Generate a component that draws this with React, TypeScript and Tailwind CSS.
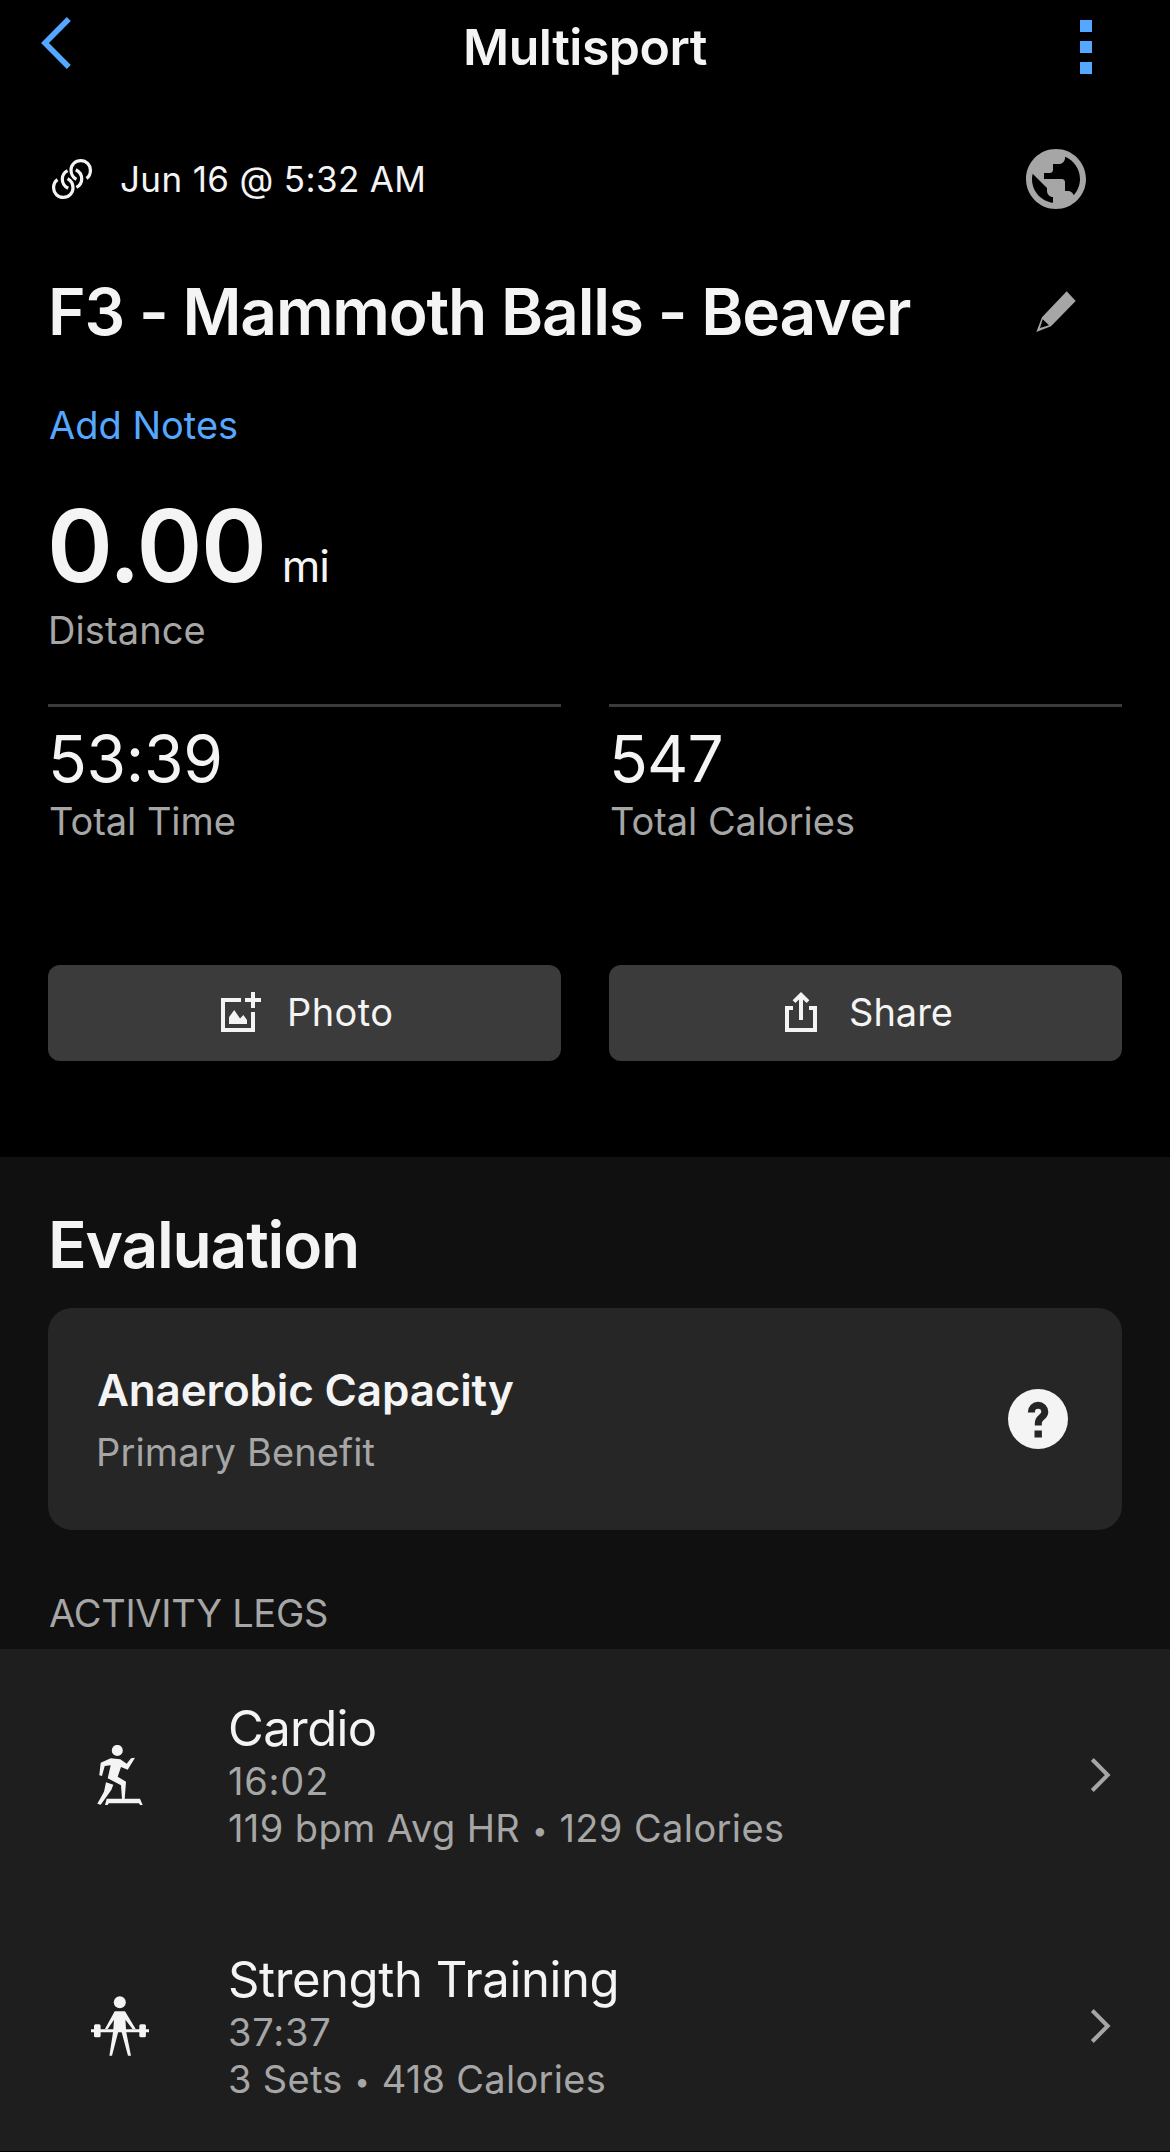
import type { ReactNode } from 'react';

function BackIcon() {
  return (
    <svg width="30" height="52" viewBox="0 0 30 52" fill="none" stroke="currentColor" strokeWidth="5.6">
      <path d="M27.8 2 4 26l23.8 24" />
    </svg>
  );
}

function LinkIcon() {
  const half = (
    <>
      <path d="M5.5 20.6C3 22.4 1.6 25.3 1.6 28.6a9.6 9.6 0 0 0 9.6 9.8c5.6 0 9.8-4.2 9.8-9.4 0-4-2-7.5-5.4-9.4" />
      <path d="M15.6 11.6C12 13.5 10.3 16.5 10.3 20c0 4 2.2 7.5 5.9 9.3" />
    </>
  );
  return (
    <svg width="40" height="40" viewBox="0 0 40 40" fill="none" stroke="currentColor" strokeWidth="3.2">
      {half}
      <g transform="rotate(180 20 20)">{half}</g>
    </svg>
  );
}

function GlobeIcon() {
  return (
    <svg width="60" height="60" viewBox="2 2 20 20" fill="currentColor">
      <path d="M12 2C6.48 2 2 6.48 2 12s4.48 10 10 10 10-4.48 10-10S17.52 2 12 2zm-1 17.93c-3.95-.49-7-3.85-7-7.93 0-.62.08-1.21.21-1.79L9 15v1c0 1.1.9 2 2 2v1.93zm6.9-2.54c-.26-.81-1-1.39-1.9-1.39h-1v-3c0-.55-.45-1-1-1H8v-2h2c.55 0 1-.45 1-1V7h2c1.1 0 2-.9 2-2v-.41c2.93 1.19 5 4.06 5 7.41 0 2.08-.8 3.97-2.1 5.39z" />
    </svg>
  );
}

function PencilIcon() {
  return (
    <svg width="40" height="41" viewBox="0 0 40 41" fill="currentColor" fillRule="evenodd">
      <path d="M30.7.3 39.7 10 15 35.3.3 41 6 26.3ZM6.7 28.3 4 37l9-2.7Z" />
    </svg>
  );
}

function PhotoIcon() {
  return (
    <svg width="40" height="40" viewBox="0 0 40 40" fill="currentColor">
      <path d="M0 6h20v4H4v26h26V20h4v20H0Z" />
      <path d="M30 0h4v6h6v4h-6v6h-4v-6h-6V6h6Z" />
      <path d="M8 25.2 13.2 18l5.8 8.4 3.4-3.4L26 28v4H8Z" />
    </svg>
  );
}

function ShareIcon() {
  return (
    <svg width="40" height="40" viewBox="-4 0 40 40" fill="none" stroke="currentColor" strokeWidth="4">
      <path d="M8 16H2v22h28V16h-6M16 28V3M9 9.6l7-6.8 7 6.8" />
    </svg>
  );
}

function HelpIcon() {
  return (
    <svg width="60" height="60" viewBox="0 0 60 60">
      <circle cx="30" cy="30" r="30" fill="#f4f4f4" />
      <path
        d="M23.4 23.6V23a6.7 6.7 0 0 1 13.4 0c0 5.4-6.5 5-6.5 11.2v2.3"
        fill="none"
        stroke="#262626"
        strokeWidth="7"
      />
      <path d="M26.5 41.6h7.4v7h-7.4Z" fill="#262626" />
    </svg>
  );
}

function CardioIcon() {
  return (
    <svg width="60" height="60" viewBox="-7 0 60 60" fill="currentColor">
      <circle cx="20.3" cy="5.4" r="5.5" />
      <path d="M3.7 17.7 13.7 13.3 23.3 14.3 29.7 18.7 34 13.3 38 12.7 30.7 24.7 24 22 20.7 31.7 29 36.7 27.7 54H25L24 40.3 10.7 33.3 13.7 20.3 7.7 21 5 31 2.3 30.3Z" />
      <path d="M9 37.3 16.3 39.7 14.3 45 3.7 59.7.3 58.7 7 46.7Z" />
      <path d="M9.7 53.7H43L45.7 60H43l-1-1.7H11.7L10.7 60H8Z" />
    </svg>
  );
}

function StrengthIcon() {
  return (
    <svg width="60" height="60" viewBox="-1 0 60 60" fill="currentColor">
      <circle cx="28.8" cy="6.3" r="6" />
      <path d="M23.7 15.3H34L44.8 33.3H41.7L34.4 23.7 35.2 36 40 59.7H37L30.6 36H27.2L21 59.7H18.4L22.2 35 23 23.7 16.5 33.3H13.8Z" />
      <path d="M0 33.3h58v3H0Z" />
      <rect x="3" y="28.3" width="6.6" height="13" rx="1.5" />
      <rect x="48.3" y="28.3" width="6.6" height="13" rx="1.5" />
    </svg>
  );
}

function ChevronIcon() {
  return (
    <svg width="22" height="36" viewBox="0 0 22 36" fill="none" stroke="currentColor" strokeWidth="4">
      <path d="m2.3 2.5 15.4 15.5L2.3 33.5" />
    </svg>
  );
}

function Stat({ value, label, className }: { value: string; label: string; className: string }) {
  return (
    <div className="border-t-[3px] border-[#3b3b3b] pt-[13px]">
      <p className={`text-[64px] leading-[77px] ${className}`}>{value}</p>
      <p className="mt-px pl-px text-[38px] leading-[46px] tracking-[-0.05px] text-[#a6a6a6]">{label}</p>
    </div>
  );
}

function Dot() {
  return (
    <span className="relative -top-[2px] inline-block w-[17px] text-center text-[27px] leading-none tracking-normal">
      •
    </span>
  );
}

function Leg({
  icon,
  name,
  nameClass,
  time,
  effort,
  calories,
  detailClass,
}: {
  icon: ReactNode;
  name: string;
  nameClass: string;
  time: string;
  effort: string;
  calories: string;
  detailClass: string;
}) {
  return (
    <li className="flex h-[251px] items-center pr-[58px] pl-[90px]">
      {icon}
      <div className="ml-[78px] flex-1">
        <p className={`pt-px text-[49px] leading-[59px] ${nameClass}`}>{name}</p>
        <p className="text-[38px] leading-[46px] tracking-[0.8px] text-[#a6a6a6]">{time}</p>
        <p className={`mt-px text-[38px] leading-[46px] text-[#a6a6a6] ${detailClass}`}>
          {effort} <Dot /> {calories}
        </p>
      </div>
      <span className="text-[#a6a6a6]">
        <ChevronIcon />
      </span>
    </li>
  );
}

export default function App() {
  return (
    <div className="h-[2152px] w-[1170px] overflow-hidden bg-black font-['Inter',sans-serif] text-[#f4f4f4]">
      <header className="grid h-[94px] grid-cols-[200px_1fr_200px] items-center">
        <button className="mb-2 pl-[41px] text-[#54a8ff]" aria-label="Back">
          <BackIcon />
        </button>
        <h1 className="text-center text-[50px] leading-[60px] font-semibold tracking-[-0.5px]">Multisport</h1>
        <button className="flex flex-col items-end gap-[9px] pr-[78px]" aria-label="More">
          <span className="size-3 bg-[#54a8ff]" />
          <span className="size-3 bg-[#54a8ff]" />
          <span className="size-3 bg-[#54a8ff]" />
        </button>
      </header>

      <div className="mt-[55px] flex items-center pr-[84px] pl-[52px]">
        <LinkIcon />
        <p className="ml-[28px] flex-1 text-[35px] leading-[40px] tracking-[0.36px]">Jun 16 @ 5:32 AM</p>
        <span className="text-[#a6a6a6]">
          <GlobeIcon />
        </span>
      </div>

      <div className="mt-[63px] flex items-center justify-between pr-[94px] pl-[48px]">
        <h2 className="text-[64px] leading-[79px] font-semibold tracking-[-1.18px]">F3 - Mammoth Balls - Beaver</h2>
        <span className="text-[#a6a6a6]">
          <PencilIcon />
        </span>
      </div>

      <p className="mt-[51px] pl-[49px] text-[38px] leading-[46px] text-[#54a8ff]">Add Notes</p>

      <div className="mt-[47px] flex items-baseline pl-[47px]">
        <span className="text-[100px] leading-[101px] font-semibold tracking-[-1.4px]">0.00</span>
        <span className="ml-[16px] text-[44px] leading-[50px] tracking-[-1px]">mi</span>
      </div>
      <p className="mt-[11px] pl-[48px] text-[38px] leading-[46px] tracking-[0.1px] text-[#a6a6a6]">Distance</p>

      <div className="mx-[48px] mt-[51px] grid grid-cols-2 gap-[48px]">
        <Stat value="53:39" label="Total Time" className="tracking-[-0.3px]" />
        <Stat value="547" label="Total Calories" className="tracking-[-0.88px]" />
      </div>

      <div className="mx-[48px] mt-[121px] grid grid-cols-2 gap-[48px]">
        <button className="flex h-[96px] items-center rounded-[12px] bg-[#3b3b3b] pb-[3px] pl-[173px] text-[38px] leading-[46px]">
          <PhotoIcon />
          <span className="ml-[26px] tracking-[0.4px]">Photo</span>
        </button>
        <button className="flex h-[96px] items-center rounded-[12px] bg-[#3b3b3b] pb-[3px] pl-[172px] text-[38px] leading-[46px]">
          <ShareIcon />
          <span className="ml-[28px]">Share</span>
        </button>
      </div>

      <section className="mt-[96px] bg-[#101010] px-[48px] pt-[48px] pb-[13px]">
        <h2 className="text-[64px] leading-[79px] font-semibold tracking-[-1.17px]">Evaluation</h2>
        <div className="mt-6 flex h-[222px] items-center justify-between rounded-[24px] bg-[#262626] pr-[54px] pl-[48px]">
          <div>
            <p className="pl-px text-[44px] leading-[54px] font-semibold tracking-[-0.16px]">Anaerobic Capacity</p>
            <p className="mt-3 text-[38px] leading-[46px] tracking-[0.12px] text-[#a6a6a6]">Primary Benefit</p>
          </div>
          <HelpIcon />
        </div>
        <h3 className="mt-[60px] pl-px text-[38px] leading-[46px] tracking-[-0.27px] text-[#a6a6a6]">ACTIVITY LEGS</h3>
      </section>

      <ul className="bg-[#1e1e1e]">
        <Leg
          icon={<CardioIcon />}
          name="Cardio"
          nameClass="tracking-[-0.6px]"
          time="16:02"
          effort="119 bpm Avg HR"
          calories="129 Calories"
          detailClass="tracking-[0.4px]"
        />
        <Leg
          icon={<StrengthIcon />}
          name="Strength Training"
          nameClass="tracking-[-0.4px]"
          time="37:37"
          effort="3 Sets"
          calories="418 Calories"
          detailClass="tracking-[0.3px]"
        />
      </ul>
    </div>
  );
}
